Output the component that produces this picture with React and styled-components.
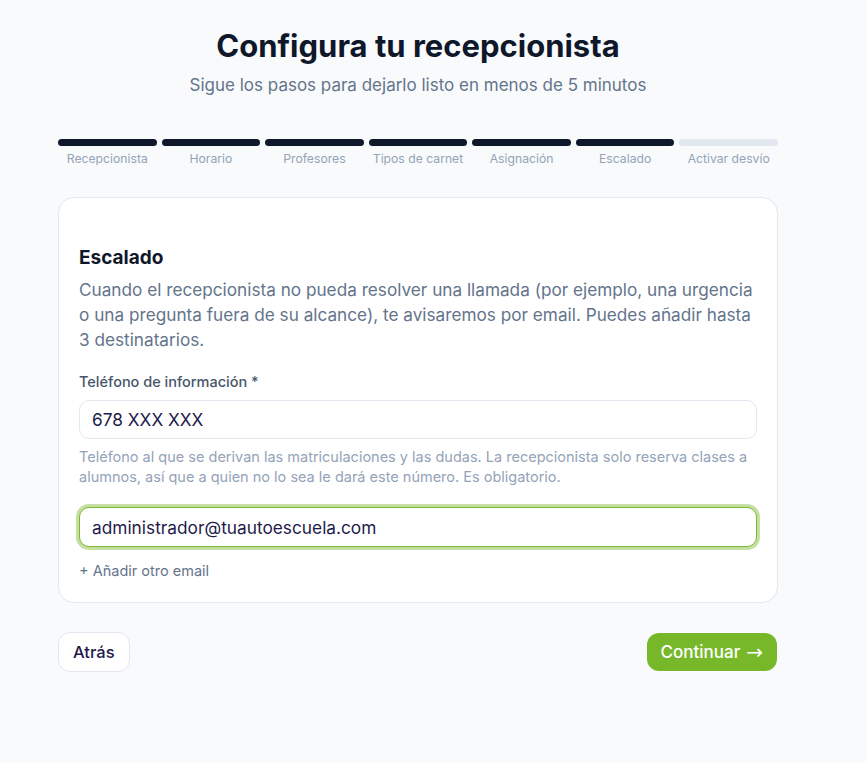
import React from "react";
import styled, { createGlobalStyle } from "styled-components";

const Global = createGlobalStyle`
  html, body { margin: 0; padding: 0; background: #f8fafc; }
  body { font-family: "Inter", "Noto Sans", sans-serif; -webkit-font-smoothing: antialiased; }
  * { box-sizing: border-box; }
`;

const Page = styled.div`
  width: 836px;
  min-height: 762px;
  padding-top: 26px;
`;

const Container = styled.div`
  width: 720px;
  margin: 0 auto;
`;

const Header = styled.header`
  text-align: center;
`;

const Title = styled.h1`
  margin: 0;
  font-size: 31px;
  line-height: 40px;
  font-weight: 700;
  color: #0f172a;
  letter-spacing: 0;
`;

const Subtitle = styled.p`
  margin: 7px 0 0;
  font-size: 17px;
  line-height: 24px;
  color: #64748b;
`;

const Steps = styled.div`
  display: grid;
  grid-template-columns: repeat(7, 1fr);
  gap: 5px;
  margin-top: 42px;
`;

const Step = styled.div`
  display: flex;
  flex-direction: column;
  align-items: center;
  gap: 5px;
`;

const Bar = styled.div`
  width: 100%;
  height: 7px;
  border-radius: 4px;
  background: ${(p) => (p.$done ? "#0f172a" : "#e2e8f0")};
`;

const StepLabel = styled.span`
  font-size: 12.2px;
  line-height: 16px;
  color: #94a3b8;
  white-space: nowrap;
`;

const Card = styled.section`
  margin-top: 30px;
  background: #fff;
  border: 1px solid #e2e8f0;
  border-radius: 16px;
  padding: 47px 20px 21px;
`;

const CardTitle = styled.h2`
  margin: 0;
  font-size: 19px;
  line-height: 26px;
  font-weight: 700;
  color: #0f172a;
`;

const Description = styled.p`
  margin: 6px 0 0;
  font-size: 17.2px;
  line-height: 25px;
  color: #64748b;
`;

const Field = styled.div`
  margin-top: 20px;
  display: flex;
  flex-direction: column;
`;

const Label = styled.label`
  font-size: 14.5px;
  line-height: 20px;
  font-weight: 500;
  color: #475569;
  margin-bottom: 8px;
`;

const Input = styled.div`
  height: ${(p) => (p.$focus ? "40px" : "39px")};
  border-radius: 10px;
  border: 1px solid ${(p) => (p.$focus ? "#7cb82f" : "#e2e8f0")};
  box-shadow: ${(p) => (p.$focus ? "0 0 0 3px rgba(124,184,47,0.45)" : "none")};
  padding: 0 12px;
  display: flex;
  align-items: center;
  font-size: 17.3px;
  color: #1e1b4b;
  background: #fff;
`;

const Hint = styled.p`
  margin: 8px 0 0;
  font-size: 14.5px;
  line-height: 20px;
  color: #94a3b8;
`;

const EmailWrap = styled.div`
  margin-top: 20px;
`;

const AddLink = styled.button`
  margin-top: 14px;
  padding: 0;
  border: none;
  background: none;
  font: inherit;
  font-size: 14.5px;
  line-height: 20px;
  color: #64748b;
  cursor: pointer;
`;

const Actions = styled.div`
  display: flex;
  justify-content: space-between;
  align-items: center;
  margin-top: 29px;
`;

const BackButton = styled.button`
  height: 40px;
  padding: 0 14px;
  border: 1px solid #e2e8f0;
  border-radius: 12px;
  background: #fff;
  font-family: inherit;
  font-size: 16.5px;
  font-weight: 500;
  color: #1e1b4b;
`;

const NextButton = styled.button`
  height: 38px;
  padding: 0 14px;
  margin-right: 1px;
  border: none;
  border-radius: 12px;
  background: #76b82a;
  font-family: inherit;
  font-size: 17px;
  font-weight: 500;
  color: #fff;
  display: flex;
  align-items: center;
  gap: 6px;
`;

const Arrow = styled.span`
  font-family: "DejaVu Sans", sans-serif;
  font-size: 20px;
  line-height: 20px;
`;

const steps = [
  "Recepcionista",
  "Horario",
  "Profesores",
  "Tipos de carnet",
  "Asignación",
  "Escalado",
  "Activar desvío",
];

export default function App() {
  return (
    <>
      <Global />
      <Page>
        <Container>
          <Header>
            <Title>Configura tu recepcionista</Title>
            <Subtitle>Sigue los pasos para dejarlo listo en menos de 5 minutos</Subtitle>
          </Header>
          <Steps>
            {steps.map((s, i) => (
              <Step key={s}>
                <Bar $done={i < 6} />
                <StepLabel>{s}</StepLabel>
              </Step>
            ))}
          </Steps>
          <Card>
            <CardTitle>Escalado</CardTitle>
            <Description>
              Cuando el recepcionista no pueda resolver una llamada (por ejemplo, una urgencia
              o una pregunta fuera de su alcance), te avisaremos por email. Puedes añadir hasta
              3 destinatarios.
            </Description>
            <Field>
              <Label>Teléfono de información *</Label>
              <Input>678 XXX XXX</Input>
              <Hint>
                Teléfono al que se derivan las matriculaciones y las dudas. La recepcionista solo reserva clases a
                alumnos, así que a quien no lo sea le dará este número. Es obligatorio.
              </Hint>
            </Field>
            <EmailWrap>
              <Input $focus>administrador@tuautoescuela.com</Input>
            </EmailWrap>
            <AddLink>+ Añadir otro email</AddLink>
          </Card>
          <Actions>
            <BackButton>Atrás</BackButton>
            <NextButton>
              Continuar <Arrow>→</Arrow>
            </NextButton>
          </Actions>
        </Container>
      </Page>
    </>
  );
}
